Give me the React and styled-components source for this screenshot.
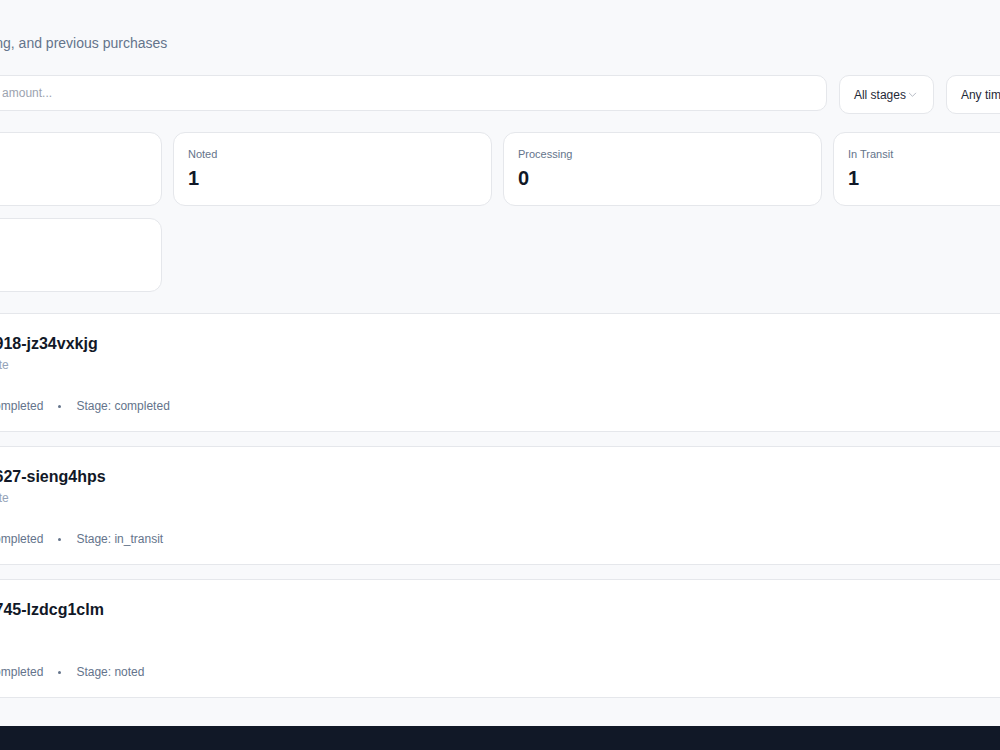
import React from 'react';
import styled, {createGlobalStyle} from "styled-components";

const GlobalStyle = createGlobalStyle`
	html, body {
		margin: 0;
		padding: 0;
		background: #f8f9fb;
		overflow: hidden;
		font-family: "Liberation Sans", Arial, sans-serif;
		color: #111827;
	}
`

const Page = styled.div`
	display: flex;
	flex-direction: column;
	align-items: center;
	min-height: 750px;
`

const Container = styled.main`
	width: 1309px;
	margin-right: 5px;
	flex-shrink: 0;
	padding-top: 3px;
	display: flex;
	flex-direction: column;
`

const Header = styled.header`
	display: flex;
	flex-direction: column;
	gap: 6px;
`

const Title = styled.h1`
	margin: 0;
	font-size: 20px;
	line-height: 24px;
	font-weight: 700;
	color: #111827;
`

const Subtitle = styled.p`
	margin: 0;
	font-size: 14px;
	line-height: 20px;
	color: #64748b;
`

const Toolbar = styled.div`
	display: flex;
	align-items: flex-start;
	gap: 12px;
	margin-top: 22px;
`

const SearchBox = styled.div`
	flex: 1;
	height: 36px;
	box-sizing: border-box;
	display: flex;
	align-items: center;
	gap: 8px;
	padding: 0 12px;
	background: #fff;
	border: 1px solid #e5e7eb;
	border-radius: 10px;
	color: #9ca3af;
`

const SearchInput = styled.input`
	flex: 1;
	border: 0 none;
	outline: none;
	background: transparent;
	font-family: inherit;
	font-size: 12px;
	color: #111827;

	&::placeholder {
		color: #9ca3af;
	}
`

const FilterButton = styled.button`
	height: 39px;
	box-sizing: border-box;
	display: flex;
	align-items: center;
	gap: 1px;
	padding: 0 14px;
	background: #fff;
	border: 1px solid #e5e7eb;
	border-radius: 10px;
	font-family: inherit;
	font-size: 12px;
	color: #1f2937;
	white-space: nowrap;

	& > svg {
		color: #9ca3af;
		margin-right: 1px;
	}
`

const StatsGrid = styled.section`
	display: grid;
	grid-template-columns: repeat(4, 1fr);
	gap: 12px 11px;
	margin-top: 18px;
`

const StatCard = styled.div`
	height: 74px;
	box-sizing: border-box;
	padding: 14px;
	background: #fff;
	border: 1px solid #e5e7eb;
	border-radius: 12px;
	display: flex;
	flex-direction: column;
	gap: 5px;
`

const StatLabel = styled.span`
	font-size: 11px;
	line-height: 14px;
	color: #64748b;
`

const StatValue = styled.span`
	font-size: 20px;
	line-height: 24px;
	font-weight: 700;
	color: #111827;
`

const List = styled.section`
	display: flex;
	flex-direction: column;
	gap: 14px;
	margin-top: 21px;
`

const Row = styled.article`
	height: 119px;
	box-sizing: border-box;
	display: flex;
	align-items: flex-start;
	gap: 16px;
	padding: 20px 24px 20px 26px;
	background: #fff;
	border: 1px solid #e5e7eb;
	border-radius: 12px;
`

const RowIcon = styled.div`
	width: 48px;
	height: 48px;
	flex-shrink: 0;
	border-radius: 12px;
	background: #f1f5f9;
	color: #64748b;
	display: flex;
	align-items: center;
	justify-content: center;
`

const RowBody = styled.div`
	display: flex;
	flex-direction: column;
`

const RowTitle = styled.h3`
	margin: 0;
	font-size: 16px;
	line-height: 20px;
	font-weight: 700;
	color: #111827;
`

const RowSub = styled.div`
	margin-top: 3px;
	min-height: 16px;
	font-size: 12px;
	line-height: 16px;
	color: #94a3b8;
`

const RowMeta = styled.div`
	margin-top: 25px;
	display: flex;
	align-items: center;
	gap: 15px;
	font-size: 12px;
	line-height: 16px;
	color: #64748b;
`

const Dot = styled.span`
	width: 3px;
	height: 3px;
	border-radius: 50%;
	background: #64748b;
`

const Footer = styled.footer`
	align-self: stretch;
	height: 40px;
	margin-top: 28px;
	background: #111827;
`

const Chevron = () => (
	<svg width="11" height="11" viewBox="0 0 24 24" fill="none" stroke="currentColor" strokeWidth="1.6" strokeLinecap="round" strokeLinejoin="round">
		<path d="m5 9 7 7 7-7"/>
	</svg>
)

const stats = [
	{label: 'Total', value: 3},
	{label: 'Noted', value: 1},
	{label: 'Processing', value: 0},
	{label: 'In Transit', value: 1},
	{label: 'Completed', value: 1},
]

const purchases = [
	{id: 'P-12583918-jz34vxkjg', source: 'Seller: Private', payment: 'completed', stage: 'completed'},
	{id: 'P-14491627-sieng4hps', source: 'Seller: Private', payment: 'completed', stage: 'in_transit'},
	{id: 'P-16312745-lzdcg1clm', source: '', payment: 'completed', stage: 'noted'},
]

const App = () => {
	return (
		<Page>
			<GlobalStyle/>
			<Container>
				<Header>
					<Title>Purchases</Title>
					<Subtitle>View active items, shipping, and previous purchases</Subtitle>
				</Header>
				<Toolbar>
					<SearchBox>
						<svg width="14" height="14" viewBox="0 0 24 24" fill="none" stroke="currentColor" strokeWidth="2" strokeLinecap="round">
							<circle cx="11" cy="11" r="7"/>
							<path d="m20 20-3.5-3.5"/>
						</svg>
						<SearchInput placeholder="Search by ID, seller or amount..."/>
					</SearchBox>
					<FilterButton>All stages<Chevron/></FilterButton>
					<FilterButton>Any time<Chevron/></FilterButton>
					<FilterButton>Sort: Latest<Chevron/></FilterButton>
				</Toolbar>
				<StatsGrid>
					{stats.map(s => (
						<StatCard key={s.label}>
							<StatLabel>{s.label}</StatLabel>
							<StatValue>{s.value}</StatValue>
						</StatCard>
					))}
				</StatsGrid>
				<List>
					{purchases.map(p => (
						<Row key={p.id}>
							<RowIcon>
								<svg width="20" height="20" viewBox="0 0 24 24" fill="none" stroke="currentColor" strokeWidth="2" strokeLinecap="round" strokeLinejoin="round">
									<path d="M21 8 12 3 3 8v8l9 5 9-5z"/>
									<path d="M3 8l9 5 9-5M12 13v8"/>
								</svg>
							</RowIcon>
							<RowBody>
								<RowTitle>{p.id}</RowTitle>
								<RowSub>{p.source}</RowSub>
								<RowMeta>
									<span>Payment: {p.payment}</span>
									<Dot/>
									<span>Stage: {p.stage}</span>
								</RowMeta>
							</RowBody>
						</Row>
					))}
				</List>
			</Container>
			<Footer/>
		</Page>
	);
};

export default App;
